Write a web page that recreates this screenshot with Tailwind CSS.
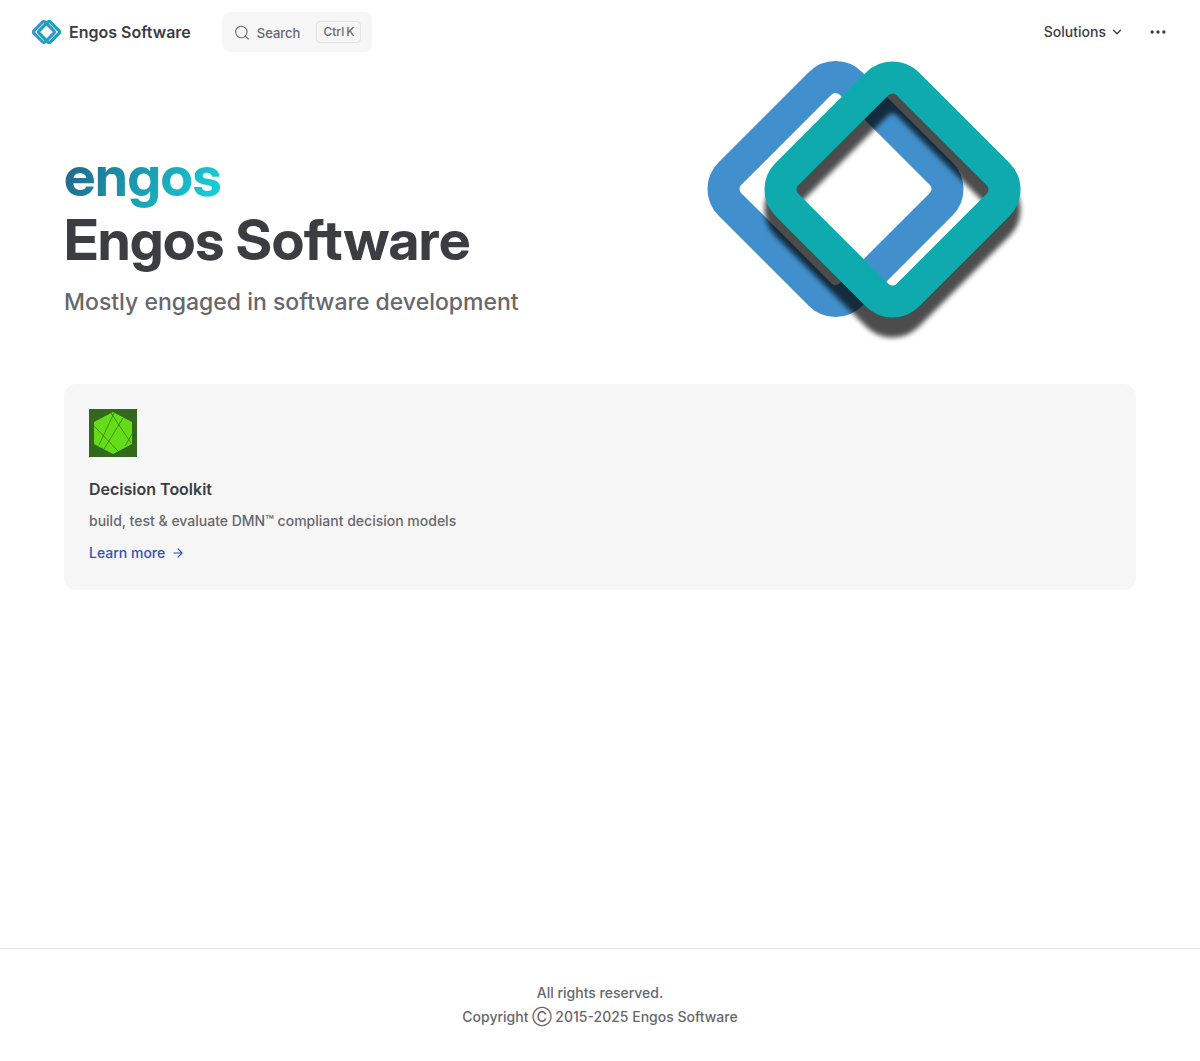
<!DOCTYPE html>
<html lang="en">
<head>
<meta charset="utf-8">
<meta name="viewport" content="width=device-width, initial-scale=1">
<title>Engos Software</title>
<script src="https://cdn.jsdelivr.net/npm/@tailwindcss/browser@4"></script>
</head>
<body class="flex min-h-screen flex-col bg-white font-['Inter',sans-serif] text-[#3c3c43]">
<header class="flex h-16 items-center justify-between px-8">
  <div class="flex items-center gap-[31px]">
    <a href="#" class="flex items-center gap-2 text-base font-semibold">
      <svg class="h-6 w-[29px]" viewBox="708 61 313 257" fill="none" stroke-width="34" aria-hidden="true">
        <rect x="750.5" y="103.5" width="171" height="171" rx="21.5" transform="rotate(45 836 189)" stroke="#4190cd"/>
        <rect x="807" y="104" width="171" height="171" rx="21.5" transform="rotate(45 892.5 189.5)" stroke="#0eaaae"/>
      </svg>
      Engos Software
    </a>
    <button type="button" class="flex h-10 items-center rounded-lg bg-[#f6f6f7] pr-[11px] pl-3 text-[#67676c]">
      <svg class="size-4" viewBox="0 0 24 24" fill="none" stroke="currentColor" stroke-width="1.6" stroke-linecap="round" stroke-linejoin="round" aria-hidden="true"><circle cx="11" cy="12" r="8.5"/><path d="m21.5 22.5-4.4-4.4"/></svg>
      <span class="ml-[7px] pt-[3px] text-[13px] font-medium">Search</span>
      <span class="ml-4 flex h-[22px] items-center gap-0.5 rounded border border-[#e2e2e3] px-1.5 text-xs font-medium"><kbd class="font-[inherit]">Ctrl</kbd><kbd class="font-[inherit]">K</kbd></span>
    </button>
  </div>
  <nav class="flex items-center">
    <button type="button" class="flex items-center gap-1 text-sm font-medium">Solutions
      <svg class="size-3.5" viewBox="0 0 24 24" fill="none" stroke="currentColor" stroke-width="2.4" stroke-linecap="round" stroke-linejoin="round" aria-hidden="true"><path d="m6 9 6 6 6-6"/></svg>
    </button>
    <button type="button" aria-label="More" class="ml-6">
      <svg class="size-5" viewBox="0 0 24 24" fill="currentColor" aria-hidden="true"><circle cx="5" cy="12" r="2"/><circle cx="12" cy="12" r="2"/><circle cx="19" cy="12" r="2"/></svg>
    </button>
  </nav>
</header>
<main class="px-16">
  <section class="-mt-4 grid grid-cols-[1fr_436px] pb-10">
    <div class="pt-24 pb-6">
      <h1 class="font-['Inter_Display','Inter',sans-serif] text-[56px] leading-16 font-bold tracking-[-0.4px]">
        <span class="block w-fit bg-[linear-gradient(120deg,#235f85_0%,#13d8dd_100%)] bg-clip-text text-transparent">engos</span>
        <span class="block">Engos Software</span>
      </h1>
      <p class="pt-3 text-[23px] leading-9 font-medium text-[#67676c]">Mostly engaged in software development</p>
    </div>
    <svg class="h-74 w-[340px]" viewBox="700 48 340 296" fill="none" stroke-width="32" role="img" aria-label="Engos logo">
      <defs><filter id="soft" x="-20%" y="-20%" width="140%" height="140%"><feGaussianBlur stdDeviation="2.5"/></filter></defs>
      <rect x="750" y="103.5" width="171" height="171" rx="21.5" transform="rotate(45 835.5 189)" stroke="#4190cd"/>
      <g filter="url(#soft)"><rect x="807" y="124" width="171" height="171" rx="21.5" transform="rotate(45 892.5 209.5)" stroke="#000" stroke-opacity=".7"/></g>
      <rect x="807" y="104" width="171" height="171" rx="21.5" transform="rotate(45 892.5 189.5)" stroke="#0eaaae"/>
    </svg>
  </section>
  <a href="#" class="block rounded-xl border border-[#f6f6f7] bg-[#f6f6f7] p-6">
    <svg class="mb-5 size-12" viewBox="0 0 48 48" aria-hidden="true">
      <path fill="#33691e" d="M0 0h48v48H0z"/>
      <path fill="#64dd17" d="m24 3 19 10v22L24 45 5 35V13z"/>
      <path fill="none" stroke="#33691e" stroke-width=".7" d="M25 4 10 36M34 9 15 40M22 4l20 30M5 17l25 26M43 25l-7 12"/>
    </svg>
    <h2 class="text-base leading-6 font-semibold">Decision Toolkit</h2>
    <p class="pt-2 text-sm leading-6 font-medium text-[#67676c]">build, test &amp; evaluate DMN™ compliant decision models</p>
    <p class="flex items-center gap-1.5 pt-2 text-sm leading-6 font-medium text-[#3451b2]">Learn more
      <svg class="size-3.5" viewBox="0 0 24 24" fill="none" stroke="currentColor" stroke-width="2" stroke-linecap="round" stroke-linejoin="round" aria-hidden="true"><path d="M5 12h14m-7-7 7 7-7 7"/></svg>
    </p>
  </a>
</main>
<footer class="mt-auto border-t border-[#e2e2e3] px-8 py-8 text-center text-sm leading-6 font-medium text-[#67676c]">
  <p>All rights reserved.</p>
  <p>Copyright Ⓒ 2015-2025 Engos Software</p>
</footer>
</body>
</html>
